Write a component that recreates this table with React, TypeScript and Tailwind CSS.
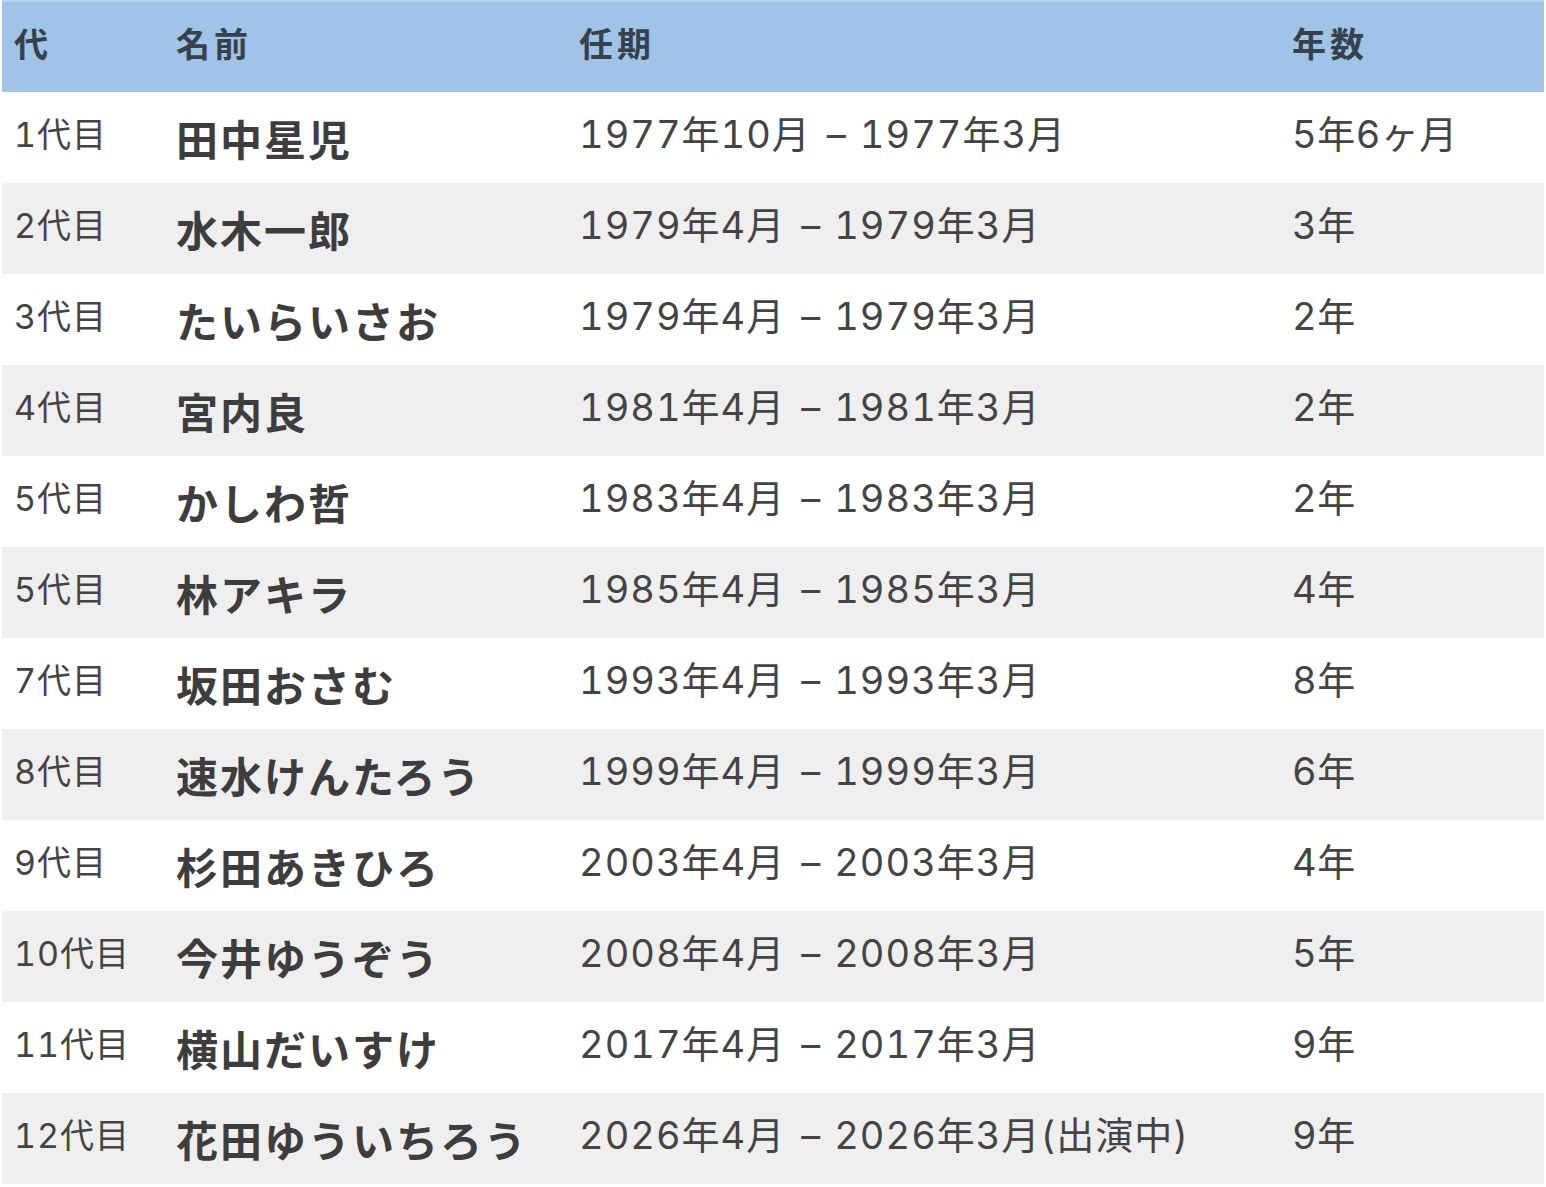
const rows = [
  { gen: '1代目', name: '田中星児', from: '1977年10月', to: '1977年3月', years: '5年6ヶ月' },
  { gen: '2代目', name: '水木一郎', from: '1979年4月', to: '1979年3月', years: '3年' },
  { gen: '3代目', name: 'たいらいさお', from: '1979年4月', to: '1979年3月', years: '2年' },
  { gen: '4代目', name: '宮内良', from: '1981年4月', to: '1981年3月', years: '2年' },
  { gen: '5代目', name: 'かしわ哲', from: '1983年4月', to: '1983年3月', years: '2年' },
  { gen: '5代目', name: '林アキラ', from: '1985年4月', to: '1985年3月', years: '4年' },
  { gen: '7代目', name: '坂田おさむ', from: '1993年4月', to: '1993年3月', years: '8年' },
  { gen: '8代目', name: '速水けんたろう', from: '1999年4月', to: '1999年3月', years: '6年' },
  { gen: '9代目', name: '杉田あきひろ', from: '2003年4月', to: '2003年3月', years: '4年' },
  { gen: '10代目', name: '今井ゆうぞう', from: '2008年4月', to: '2008年3月', years: '5年' },
  { gen: '11代目', name: '横山だいすけ', from: '2017年4月', to: '2017年3月', years: '9年' },
  { gen: '12代目', name: '花田ゆういちろう', from: '2026年4月', to: '2026年3月(出演中)', years: '9年' },
]

export default function App() {
  return (
    <div
      className="h-[1187px] w-[1546px] bg-white px-[2px] text-[#444] tabular-nums"
      style={{ fontFamily: 'Inter, "Noto Sans CJK JP", sans-serif' }}
    >
      <table className="w-[1542px] table-fixed border-collapse">
        <colgroup>
          <col className="w-[162px]" />
          <col className="w-[403px]" />
          <col className="w-[713px]" />
          <col className="w-[264px]" />
        </colgroup>
        <thead>
          <tr className="h-[91px] border-t-2 border-[#b3d9ea] bg-[#a0c4e7] text-left text-[34px] font-bold tracking-[4px] text-[#36414c]">
            <th className="pl-3 pb-1.5">代</th>
            <th className="pl-3 pb-1.5">名前</th>
            <th className="pl-3 pb-1.5">任期</th>
            <th className="pl-3 pb-1.5">年数</th>
          </tr>
        </thead>
        <tbody>
          {rows.map((r, i) => (
            <tr key={i} className={i % 2 === 1 ? 'h-[91px] bg-[#efefef]' : 'h-[91px] bg-white'}>
              <td className="pl-3 pb-1.5 text-[34px] tracking-[1px]">{r.gen}</td>
              <td
                className="whitespace-nowrap pl-3 text-[42px] font-bold tracking-[2px] text-[#3d3d3d]"
                style={{ fontFamily: '"Noto Sans CJK JP", sans-serif' }}
              >
                {r.name}
              </td>
              <td className="whitespace-nowrap pl-3 pb-1.5 text-[38px] tracking-[1px]">
                {r.from}
                <span className="ml-[16px] mr-[14px] tracking-normal">–</span>
                {r.to}
              </td>
              <td className="pl-3 pb-1.5 text-[38px] tracking-[0.5px]">{r.years}</td>
            </tr>
          ))}
        </tbody>
      </table>
    </div>
  )
}
